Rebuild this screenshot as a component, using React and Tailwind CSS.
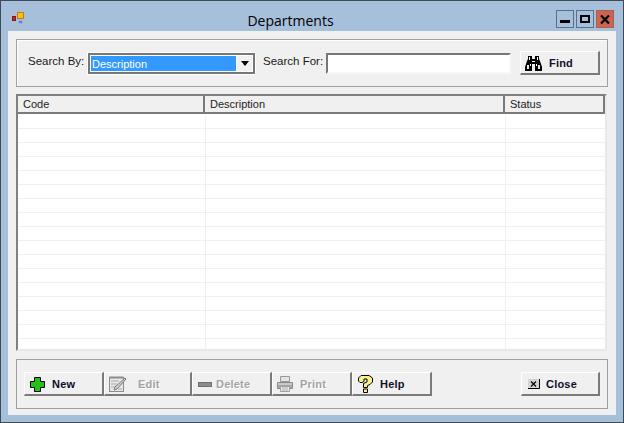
import React from 'react';

const rows = Array.from({ length: 17 });

function Raised({ className = '', children }) {
  return (
    <button className={`flex items-center h-[24px] bg-[#f0f0f0] border-t border-l border-t-white border-l-white border-r-2 border-b-2 border-r-[#7a7a7a] border-b-[#7a7a7a] text-[11px] font-bold font-['Liberation_Sans',sans-serif] tracking-[0.2px] ${className}`}>
      {children}
    </button>
  );
}

function AppIcon() {
  return (
    <svg width="14" height="14" viewBox="0 0 14 14" className="mt-[4px]">
      <rect x="0" y="0" width="14" height="14" fill="#b4bcc8" opacity="0.55" />
      <rect x="6.5" y="1.5" width="6" height="6" fill="#f4c20d" stroke="#b9811a" />
      <rect x="1.5" y="5.5" width="3" height="4" fill="#c8281c" stroke="#7c1a14" />
      <rect x="7.5" y="9.5" width="4" height="3" fill="#4d86e0" stroke="#9ab5dc" />
    </svg>
  );
}

function WinButton({ className = '', children }) {
  return (
    <div className={`w-[18px] h-[18px] border border-[#5a7088] flex items-center justify-center ${className}`}>
      {children}
    </div>
  );
}

function Binoculars() {
  return (
    <svg width="17" height="15" viewBox="0 0 17 15">
      <path d="M3 0h4v3h3V0h4v3l1 2 2 6v4h-7V8H7v7H0v-4l2-6 1-2z" fill="#000" />
      <path d="M4 1h1v3H4zM12 1h1v3h-1zM7 5h3v1H7z" fill="#fff" />
      <path d="M2 9h2v4H2zM13 9h2v4h-2z" fill="#e8e8e8" />
      <path d="M5 8h1v2H5zM11 8h1v2h-1z" fill="#fff" />
    </svg>
  );
}

function PlusIcon() {
  return (
    <svg width="15" height="15" viewBox="0 0 15 15">
      <path d="M4.5 .5h6v4h4v6h-4v4h-6v-4h-4v-6h4z" fill="#22c414" stroke="#000" />
    </svg>
  );
}

function EditIcon() {
  return (
    <svg width="18" height="16" viewBox="0 0 18 16">
      <rect x=".5" y="1.5" width="14" height="14" fill="#e8e8e8" stroke="#8c8c8c" />
      <rect x=".5" y=".5" width="14" height="2" fill="#8c8c8c" />
      <path d="M2 5h8M2 8h6M2 11h4M9 13h4" stroke="#a8a8a8" />
      <path d="M16 2l1 1-9 10-3 1 1-3z" fill="#d0d0d0" stroke="#787878" />
    </svg>
  );
}

function PrintIcon() {
  return (
    <svg width="16" height="16" viewBox="0 0 16 16">
      <path d="M3.5 .5h9v5h-9z" fill="#e4e4e4" stroke="#989898" />
      <path d="M.5 6.5h15v6h-15z" fill="#a8a8a8" stroke="#8a8a8a" />
      <path d="M1 7h14v2H1z" fill="#c8c8c8" />
      <path d="M3.5 10.5h9v5h-9z" fill="#ececec" stroke="#a0a0a0" />
      <path d="M5 12h6M5 14h6" stroke="#b0b0b0" />
    </svg>
  );
}

function HelpIcon() {
  return (
    <svg width="15" height="18" viewBox="0 0 15 18">
      <path d="M.5 6V3L3 .5h8L14.500 3v4L12 9.500 9.500 10.500v2h-4v-4L9 7V4H6v2.500L4 7.500H2z" fill="#fbf38a" stroke="#000" />
      <path d="M5.500 14h4v3.500h-4z" fill="#fbf38a" stroke="#000" />
    </svg>
  );
}

function CloseIcon() {
  return (
    <svg width="12" height="10" viewBox="0 0 12 10">
      <rect x="0" y="0" width="12" height="10" fill="#d4d4d4" />
      <path d="M11.500 0v9.500H0" fill="none" stroke="#000" />
      <path d="M3 2.500l5 5M8 2.500l-5 5" stroke="#000" strokeWidth="1.200" />
    </svg>
  );
}

export default function App() {
  const disabledText = 'text-[#a3a3a3] [text-shadow:1px_1px_0_#fff]';

  return (
    <div className="w-[624px] h-[423px] bg-[#a6bfdb] border border-[#3e4a55] flex flex-col font-['Liberation_Sans',sans-serif] text-[#1a1a1a] overflow-hidden">
      <div className="h-[30px] flex items-center pl-[10px] pr-[9px] shrink-0">
        <AppIcon />
        <div className="flex-1 text-center text-[14px] font-['Open_Sans',sans-serif] text-black pt-[8px]">Departments</div>
        <div className="flex gap-[2px] self-start pt-[9px]">
          <WinButton>
            <div className="w-[10px] h-[3px] bg-black mt-[4px]" />
          </WinButton>
          <WinButton>
            <div className="w-[10px] h-[8px] border-2 border-black" />
          </WinButton>
          <WinButton className="bg-[#cd6451] border-[#a9604f]">
            <svg width="10" height="9" viewBox="0 0 10 9">
              <path d="M1 .5l8 8M9 .5l-8 8" stroke="#000" strokeWidth="2.2" />
            </svg>
          </WinButton>
        </div>
      </div>

      <div className="mx-[7px] h-[384px] bg-[#f0f0f0] px-[8px] pt-[8px] flex flex-col">
        <div className="w-[592px] h-[48px] border border-[#a0a0a0] shadow-[inset_1px_1px_0_#fff] flex items-center pl-[11px] text-[11.5px]">
          <span className="w-[60px] -mt-[2px]">Search By:</span>
          <div className="w-[167px] h-[21px] bg-white border-2 border-[#777] outline outline-white flex p-[1px]">
            <div className="flex-1 bg-[#3399ff] text-white pl-[1px] leading-[17px] text-[11px]">Description</div>
            <div className="w-[16px] bg-[#f0f0f0] border-l border-l-white flex items-center justify-center">
              <svg width="8" height="5" viewBox="0 0 8 5">
                <path d="M0 0h8L4 5z" fill="#000" />
              </svg>
            </div>
          </div>
          <span className="ml-[8px] w-[63px] -mt-[2px]">Search For:</span>
          <div className="w-[185px] h-[21px] bg-white border-2 border-[#777] border-b-[#f8f8f8] border-r-[#f8f8f8]" />
          <Raised className="ml-[9px] w-[80px] pl-[4px] pt-[1px] text-[#10102a]">
            <Binoculars />
            <span className="ml-[7px]">Find</span>
          </Raised>
        </div>

        <div className="mt-[7px] w-[591px] h-[257px] border-2 border-t-[#808080] border-l-[#808080] border-r-[#e8e8e8] border-b-[#e8e8e8] bg-white flex flex-col">
          <div className="h-[18px] w-[587px] flex shrink-0 bg-[#f0f0f0] border-b-2 border-r-2 border-[#7a7a7a] text-[11px] leading-[16px] text-[#222]">
            <div className="w-[187px] pl-[5px] border-r-2 border-r-[#7a7a7a]">Code</div>
            <div className="w-[300px] pl-[5px] border-r-2 border-r-[#7a7a7a]">Description</div>
            <div className="flex-1 pl-[5px]">Status</div>
          </div>
          <div className="flex-1 overflow-hidden pt-[1px]">
            {rows.map((_, i) => (
              <div key={i} className="h-[14px] flex border-b border-b-[#f0f0f0] w-[587px]">
                <div className="w-[188px] border-r border-r-[#f0f0f0]" />
                <div className="w-[300px] border-r border-r-[#f0f0f0]" />
              </div>
            ))}
          </div>
        </div>

        <div className="mt-[8px] w-[592px] h-[50px] border border-[#a0a0a0] flex items-center pl-[7px]">
          <Raised className="w-[80px] pl-[5px] pt-[1px] text-[#0c0c2a]">
            <PlusIcon />
            <span className="ml-[7px]">New</span>
          </Raised>
          <Raised className={`w-[88px] pl-[4px] pt-[1px] ${disabledText}`}>
            <EditIcon />
            <span className="ml-[11px]">Edit</span>
          </Raised>
          <Raised className={`w-[80px] pl-[5px] pt-[1px] ${disabledText}`}>
            <div className="w-[14px] h-[5px] bg-[#8c8c8c] border border-[#6f6f6f]" />
            <span className="ml-[4px]">Delete</span>
          </Raised>
          <Raised className={`w-[80px] pl-[4px] pt-[1px] ${disabledText}`}>
            <PrintIcon />
            <span className="ml-[7px]">Print</span>
          </Raised>
          <Raised className="w-[80px] pl-[5px] pt-[1px] text-[#101028]">
            <HelpIcon />
            <span className="ml-[7px]">Help</span>
          </Raised>
          <Raised className="ml-[89px] w-[79px] pl-[6px] pt-[1px] text-[#101028]">
            <CloseIcon />
            <span className="ml-[6px]">Close</span>
          </Raised>
        </div>
      </div>
    </div>
  );
}
